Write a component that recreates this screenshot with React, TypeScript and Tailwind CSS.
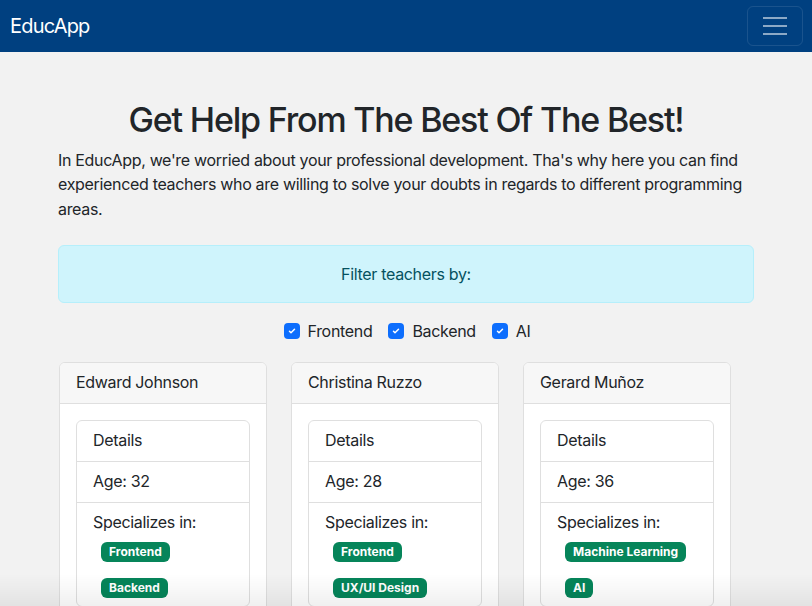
import React from "react";

type Teacher = { name: string; age: number; tags: string[] };

const teachers: Teacher[] = [
  { name: "Edward Johnson", age: 32, tags: ["Frontend", "Backend"] },
  { name: "Christina Ruzzo", age: 28, tags: ["Frontend", "UX/UI Design"] },
  { name: "Gerard Muñoz", age: 36, tags: ["Machine Learning", "AI"] },
];

function Check({ label }: { label: string }) {
  return (
    <label className="flex items-center gap-2">
      <span className="w-4 h-4 rounded-[4px] bg-[#0d6efd] flex items-center justify-center">
        <svg width="10" height="10" viewBox="0 0 20 20">
          <path d="M5 10.5l3 3 7-7" fill="none" stroke="#fff" strokeWidth="3" strokeLinecap="round" strokeLinejoin="round" />
        </svg>
      </span>
      <span>{label}</span>
    </label>
  );
}

function Card({ t }: { t: Teacher }) {
  return (
    <div className="w-[208px] bg-white border border-[#dfdfdf] rounded-[6px] overflow-hidden">
      <div className="bg-[#f7f7f7] border-b border-[#dfdfdf] px-4 pt-[7px] pb-[9px] leading-6">{t.name}</div>
      <div className="p-4">
        <div className="border border-[#dfdfdf] rounded-[6px]">
          <div className="px-4 pt-[7px] pb-[9px] leading-6 border-b border-[#dfdfdf]">Details</div>
          <div className="px-4 pt-[7px] pb-[9px] leading-6 border-b border-[#dfdfdf]">Age: {t.age}</div>
          <div className="px-4 pt-[7px] pb-2 leading-6">
            <div>Specializes in:</div>
            <div className="flex flex-col items-start pl-2 pt-[8px] gap-4">
              {t.tags.map((g) => (
                <span key={g} className="bg-[#06855a] text-white text-[12px] font-bold leading-none px-[8px] py-[4px] rounded-[6px] tracking-normal">
                  {g}
                </span>
              ))}
            </div>
          </div>
        </div>
      </div>
    </div>
  );
}

export default function App() {
  return (
    <div className="min-h-[606px] bg-[#f2f2f2] text-[#212529] text-[16px] tracking-[-0.02em]" style={{ fontFamily: "Inter, 'Noto Sans', sans-serif" }}>
      <nav className="h-[52px] bg-[#004080] flex items-center justify-between pl-[10px] pr-[9px]">
        <span className="text-white text-[20px] leading-none tracking-[-0.04em]">EducApp</span>
        <button className="w-[56px] h-[40px] border border-white/10 rounded-[6px] flex flex-col items-center justify-center gap-[6px]">
          <span className="block w-[24px] h-[2px] bg-white/55" />
          <span className="block w-[24px] h-[2px] bg-white/55" />
          <span className="block w-[24px] h-[2px] bg-white/55" />
        </button>
      </nav>
      <div className="w-[696px] mx-auto">
        <h1 className="mt-[48px] text-center text-[34px] font-medium leading-[1.2] mb-[7px] tracking-[-0.035em]">
          Get Help From The Best Of The Best!
        </h1>
        <p className="leading-[24.5px]">
          In EducApp, we're worried about your professional development. Tha's why here you can find experienced teachers who are willing to solve your doubts in regards to different programming areas.
        </p>
        <div className="mt-[24px] h-[58px] bg-[#cff4fc] border border-[#b6effb] rounded-[6px] text-[#055160] flex items-center justify-center">
          Filter teachers by:
        </div>
        <div className="mt-4 flex justify-center gap-4 leading-6 pl-[2px]">
          <Check label="Frontend" />
          <Check label="Backend" />
          <Check label="AI" />
        </div>
        <div className="mt-[19px] flex gap-[24px] pl-[1px]">
          {teachers.map((t) => (
            <Card key={t.name} t={t} />
          ))}
        </div>
      </div>
      <div className="fixed bottom-0 left-0 right-0 h-[32px] pointer-events-none bg-gradient-to-b from-transparent to-black/[0.06]" />
    </div>
  );
}
